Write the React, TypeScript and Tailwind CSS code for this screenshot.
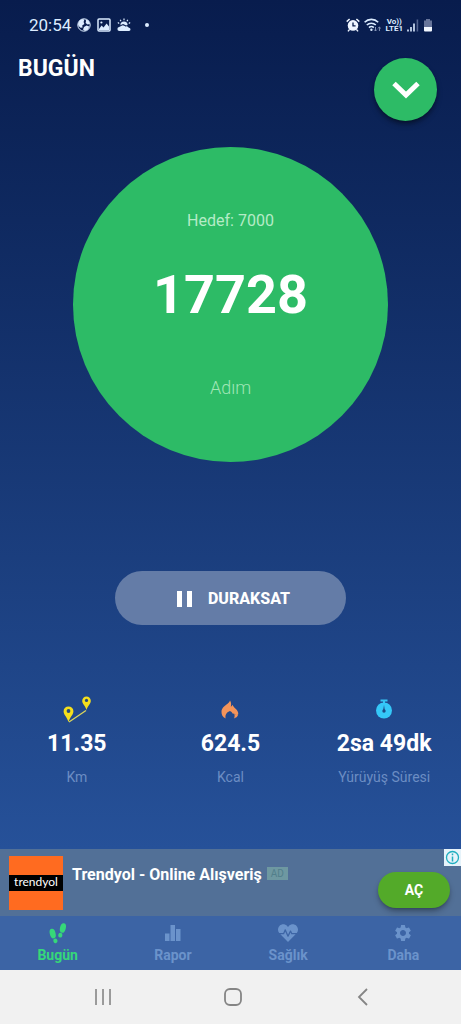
import React from "react";
import { FaHeartbeat } from "react-icons/fa";
import { MdSettings } from "react-icons/md";

const GlobeIcon = () => (
  <svg viewBox="0 0 14 14" className="h-[14px] w-[14px]" aria-hidden="true">
    <circle cx="7" cy="7" r="6.2" fill="none" stroke="#dcecff" strokeWidth="1" />
    <path d="M1 6 2.4 2.6 5 1l2.4.6L6.6 4l.8 2-2.2 1.6.4 2-2 .2L1.6 8ZM8.6 1.2l3 1.4L13 6l-2.4.4-2-1.4L9 3ZM7 9l2.6-1.6 2.6 1-1 3L8 13l-2-1.4Z" fill="#dcecff" />
  </svg>
);

const PictureIcon = () => (
  <svg viewBox="0 0 14 14" className="h-[14px] w-[14px]" aria-hidden="true">
    <rect x="1" y="1" width="12" height="12" rx="1" fill="none" stroke="#dcecff" strokeWidth="1.5" />
    <path d="M2 11 4.6 7.6 6.5 9.4 9.6 5.6 12 8.6V12H2Z" fill="#dcecff" />
    <circle cx="4.4" cy="4.5" r="1.1" fill="#dcecff" />
  </svg>
);

const WeatherIcon = () => (
  <svg viewBox="0 0 14 14" className="h-[14px] w-[14px]" aria-hidden="true">
    <path d="M7 .6v1.6M3.2 1.8 4 3.2M10.8 1.8 10 3.2M.8 4.6l1.4.8M13.2 4.6l-1.4.8" stroke="#dcecff" strokeWidth="1.2" />
    <path d="M3.4 7a3.6 3.6 0 0 1 7.2 0L9 7.6 6.4 6.2Z" fill="#dcecff" />
    <path d="M2.4 13a2 2 0 0 1 0-4 3.8 3.8 0 0 1 6-.6 2.8 2.8 0 0 1 3.4 1.4A1.6 1.6 0 0 1 12 13Z" fill="#dcecff" />
    <path d="M3.2 8.2a4 4 0 0 1 5.6-.4" fill="none" stroke="#081c4c" strokeWidth=".7" />
  </svg>
);

const AlarmIcon = () => (
  <svg viewBox="0 0 14 14" className="h-[14px] w-[14px]" aria-hidden="true">
    <circle cx="7" cy="7.4" r="5.3" fill="#eef5ff" />
    <path d="M.7 3.6 3.6 1M13.3 3.6 10.4 1M3.6 11.4 2 13.4M10.4 11.4l1.6 2" stroke="#eef5ff" strokeWidth="1.5" />
    <path d="M7 4.4v3.4h2.6" fill="none" stroke="#081c4c" strokeWidth="1.3" />
  </svg>
);

const WifiIcon = () => (
  <svg viewBox="0 0 18 14" className="h-[14px] w-[18px]" aria-hidden="true">
    <path d="M.6 4.2a9.6 9.6 0 0 1 13.6 0M2.8 7a6.6 6.6 0 0 1 9 0M5 9.6a3.4 3.4 0 0 1 4.8 0" fill="none" stroke="#dcecff" strokeWidth="1.6" />
    <circle cx="7.4" cy="11.8" r="1.2" fill="#dcecff" />
    <path d="M11.5 9v4M10.1 11.6l1.4 1.4 1.4-1.4M15.4 13V9M14 10.4 15.4 9l1.4 1.4" fill="none" stroke="#8494b8" strokeWidth="1" />
  </svg>
);

const SignalIcon = () => (
  <svg viewBox="0 0 12 14" className="h-[14px] w-[12px]" aria-hidden="true">
    <path d="M1 13.5v-2M4 13.5V9M7 13.5v-8" stroke="#dcecff" strokeWidth="1.6" />
    <path d="M10.4 13.5v-12" stroke="#53648f" strokeWidth="1.6" />
  </svg>
);

const BatteryIcon = () => (
  <svg viewBox="0 0 10 14" className="h-[14px] w-[10px]" aria-hidden="true">
    <path d="M3 1h4v1.4h2V9H1V2.4h2Z" fill="#66749a" />
    <path d="M1 9h8v3.6a1 1 0 0 1-1 1H2a1 1 0 0 1-1-1Z" fill="#f2f7ff" />
  </svg>
);

const RouteIcon = () => (
  <svg viewBox="0 0 28 27" className="h-[27px] w-[28px]" aria-hidden="true">
    <path d="M6 26 23 14.5" stroke="#dbd55c" strokeWidth="1.3" />
    <path d="M5.5 26C4 21 .6 19 .6 15.3a4.9 4.9 0 0 1 9.8 0C10.4 19 7 21 5.5 26Z" fill="#f5df1c" />
    <circle cx="5.5" cy="15" r="1.9" fill="#26497a" />
    <path d="M23.5 14C22.4 9.5 19.2 8 19.2 4.7a4.3 4.3 0 0 1 8.6 0C27.8 8 24.6 9.5 23.5 14Z" fill="#f5df1c" />
    <circle cx="23.5" cy="4.4" r="1.6" fill="#26497a" />
  </svg>
);

const FlameIcon = () => (
  <svg viewBox="0 0 18 19" className="h-[19px] w-[18px]" aria-hidden="true">
    <path d="M4.6 18.5C1.6 17 .4 14.5.5 12 .6 8 3 6.500 5.500 4.500 7.500 3 8.600 2 9 .5c1.3 1.8 1.4 4 .8 6.2.8-.4 1.3-1 1.5-1.9 1 1.4 1.7 2.5 3.3 3.9 2 1.7 2.8 3.5 2.7 5.5l-1.9 1.5c-.5-.9-1.2-1.6-2.4-2l-1.5-.1c-.4-1.2-1.200-2-2.600-2.500-2.500.8-5.100 3.200-4.300 7.400Z" fill="#f4945a" />
    <path d="M13 18.4c2-.6 3.4-1.600 4-3.400-1.300-.6-2.800-.5-3.800-1.600.6 2 .6 3.300-.2 5Z" fill="#f4945a" />
  </svg>
);

const TimerIcon = () => (
  <svg viewBox="0 0 18 20" className="h-[20px] w-[18px]" aria-hidden="true">
    <path d="M5.5 1.5h7M9 1.5v3" stroke="#35c3f3" strokeWidth="2" />
    <circle cx="9" cy="11.5" r="8" fill="#35c8f8" />
    <path d="m9 6-.9 5.5h1.8Z" fill="#1d4b87" />
    <circle cx="9" cy="12" r="1.7" fill="#1d4b87" />
  </svg>
);

const StepsIcon = () => (
  <svg viewBox="0 0 20 22" className="h-[22px] w-[20px]" aria-hidden="true">
    <g fill="currentColor">
      <ellipse cx="4.7" cy="11.6" rx="2.9" ry="4.9" transform="rotate(-14 4.7 11.6)" />
      <ellipse cx="7.4" cy="18.8" rx="2.1" ry="2.4" transform="rotate(-14 7.4 18.8)" />
      <ellipse cx="14.9" cy="6" rx="2.9" ry="4.9" transform="rotate(14 14.9 6)" />
      <ellipse cx="12.3" cy="13.2" rx="2.1" ry="2.4" transform="rotate(14 12.3 13.2)" />
    </g>
  </svg>
);

const ChartIcon = () => (
  <svg viewBox="0 0 18 18" className="h-[18px] w-[18px]" aria-hidden="true">
    <path d="M1 9.5h4.5V17H1ZM6.5 1H11v16H6.5ZM12 5h4.5v12H12Z" fill="currentColor" />
  </svg>
);

const HeartIcon = () => <FaHeartbeat className="h-5 w-5" />;
const GearIcon = () => <MdSettings className="h-5 w-5" />;

const stats = [
  { icon: RouteIcon, value: "11.35", label: "Km" },
  { icon: FlameIcon, value: "624.5", label: "Kcal" },
  { icon: TimerIcon, value: "2sa 49dk", label: "Yürüyüş Süresi" },
];

const tabs = [
  { icon: StepsIcon, label: "Bugün", active: true },
  { icon: ChartIcon, label: "Rapor", active: false },
  { icon: HeartIcon, label: "Sağlık", active: false },
  { icon: GearIcon, label: "Daha", active: false },
];

function StatusBar() {
  return (
    <div className="flex h-[50px] items-center justify-between pr-7 pl-[29px] text-[#dcecff]">
      <div className="flex items-center gap-[6px]">
        <span className="text-[17px] leading-5">20:54</span>
        <GlobeIcon />
        <PictureIcon />
        <WeatherIcon />
        <span className="ml-2 h-1 w-1 rounded-full bg-[#dcecff]" />
      </div>
      <div className="flex items-center gap-1">
        <AlarmIcon />
        <WifiIcon />
        <div className="flex flex-col items-center text-[8px] leading-[7px] font-bold">
          <span>Vo))</span>
          <span>LTE1</span>
        </div>
        <SignalIcon />
        <BatteryIcon />
      </div>
    </div>
  );
}

export default function App() {
  return (
    <div className="flex min-h-screen flex-col bg-[#f1f1f1] font-[Roboto,sans-serif]">
      <main className="flex grow flex-col bg-linear-to-b from-[#081c4d] to-[#265199]">
        <StatusBar />

        {/* Header */}
        <header className="flex items-start justify-between pt-2 pr-6 pl-[18px]">
          <h1 className="text-[23px] leading-[22px] font-bold text-white">BUGÜN</h1>
          <button type="button" aria-label="Aç" className="flex h-[63px] w-[63px] items-center justify-center rounded-full bg-[#2dbb66] shadow-md shadow-black/40">
            <svg viewBox="0 0 28 18" className="h-[18px] w-[28px]" aria-hidden="true">
              <path d="M2 2.5 14 14 26 2.5" fill="none" stroke="#fff" strokeWidth="5" />
            </svg>
          </button>
        </header>

        {/* Step counter */}
        <section className="mx-auto mt-[26px] flex aspect-square w-[315px] max-w-full flex-col items-center rounded-full bg-[#2dbb66] pt-16">
          <p className="text-[16px] leading-5 text-[#b5ebc6]">Hedef: 7000</p>
          <p className="mt-[34px] text-[54px] leading-[60px] font-bold text-white">17728</p>
          <p className="mt-[53px] text-[18px] leading-5 font-light text-[#a0e6b6]">Adım</p>
        </section>

        <button type="button" className="mx-auto mt-[109px] flex h-[54px] w-1/2 items-center justify-center gap-4 rounded-full bg-[#647ca7] pt-px pl-[5px] text-[16px] font-extrabold text-white">
          <svg viewBox="0 0 16 16" className="h-4 w-4" aria-hidden="true">
            <path d="M1 0h5v16H1ZM11 0h5v16h-5Z" fill="#fff" />
          </svg>
          DURAKSAT
        </button>

        {/* Daily stats */}
        <section className="mt-[69px] mb-[63px] grid grid-cols-3">
          {stats.map((stat) => (
            <div key={stat.label} className="flex flex-col items-center">
              <div className="flex h-[30px] items-center">
                <stat.icon />
              </div>
              <p className="mt-2 text-[23px] leading-6 font-bold text-white">{stat.value}</p>
              <p className="mt-3 text-[14px] leading-[18px] text-[#6c8dc3]">{stat.label}</p>
            </div>
          ))}
        </section>
      </main>

      {/* Ad banner */}
      <aside className="relative flex h-[67px] bg-[#527097] pr-[11px] pl-[9px]">
        <div className="mt-[7px] flex h-[54px] w-[54px] items-center bg-[#ff6b20]">
          <span className="w-full bg-black pb-[2px] text-center font-[Lato,sans-serif] text-[12px] leading-[14px] text-white">trendyol</span>
        </div>
        <p className="mt-[17px] ml-[9px] text-[16px] leading-[18px] font-bold text-white">Trendyol - Online Alışveriş</p>
        <span className="mt-[18px] ml-[5px] h-[13px] w-[21px] bg-[#6e98a1] text-center text-[10px] leading-[13px] text-[#527f8b]">AD</span>
        <button type="button" className="mt-[23px] ml-auto h-9 w-[72px] rounded-full bg-[#53aa29] text-[14px] font-bold text-white shadow-md shadow-black/30">
          AÇ
        </button>
        <button type="button" aria-label="Reklam bilgisi" className="absolute top-0 right-0 flex h-[17px] w-[17px] items-center justify-center bg-[#e6f3fa]">
          <svg viewBox="0 0 15 15" className="h-[15px] w-[15px]" aria-hidden="true">
            <circle cx="7.5" cy="7.5" r="6" fill="none" stroke="#20aebf" strokeWidth="1.3" />
            <path d="M7.5 3.6v1.6M7.5 6.4v5" stroke="#20aebf" strokeWidth="1.5" />
          </svg>
        </button>
      </aside>

      {/* Tabs */}
      <nav className="grid h-[54px] grid-cols-4 bg-[#3c64a5]">
        {tabs.map((tab) => (
          <a key={tab.label} href="#" className={tab.active ? "flex flex-col items-center pt-[6px] text-[#36d879]" : "flex flex-col items-center pt-[6px] text-[#6b93cb]"}>
            <span className="flex h-[22px] items-center">
              <tab.icon />
            </span>
            <span className="mt-[2px] text-[14px] leading-[18px] font-bold">{tab.label}</span>
          </a>
        ))}
      </nav>

      {/* Android system buttons */}
      <div className="flex h-[54px] items-center justify-around pr-[34px] pl-[38px] text-[#858585]">
        <button type="button" aria-label="Son uygulamalar">
          <svg viewBox="0 0 18 18" className="h-[18px] w-[18px]" aria-hidden="true">
            <path d="M2 1v16M9 1v16M16 1v16" stroke="currentColor" strokeWidth="1.6" />
          </svg>
        </button>
        <button type="button" aria-label="Ana ekran">
          <svg viewBox="0 0 20 20" className="h-5 w-5" aria-hidden="true">
            <rect x="2" y="2" width="16" height="16" rx="5" fill="none" stroke="currentColor" strokeWidth="1.8" />
          </svg>
        </button>
        <button type="button" aria-label="Geri">
          <svg viewBox="0 0 18 18" className="h-[18px] w-[18px]" aria-hidden="true">
            <path d="M13 1 5 9l8 8" fill="none" stroke="currentColor" strokeWidth="1.8" />
          </svg>
        </button>
      </div>
    </div>
  );
}
